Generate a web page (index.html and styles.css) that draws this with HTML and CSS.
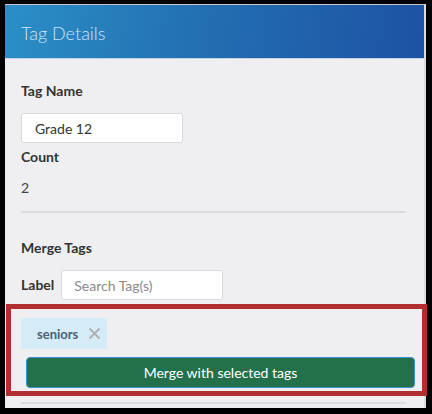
FILE: index.html
```html
<!DOCTYPE html>
<html>
<head>
<meta charset="utf-8">
<link rel="stylesheet" href="styles.css">
</head>
<body>
<div class="panel">
  <div class="panel-header">Tag Details</div>
  <div class="panel-body">
    <div class="field-label first">Tag Name</div>
    <div class="input name-input">Grade 12</div>
    <div class="field-label count-label">Count</div>
    <div class="value">2</div>
    <div class="divider"></div>
    <div class="field-label merge-label">Merge Tags</div>
    <div class="label-row">
      <span class="field-label inline">Label</span>
      <div class="input search-input placeholder">Search Tag(s)</div>
    </div>
    <div class="chips">
      <span class="chip">seniors
        <svg class="chip-x" width="13" height="13" viewBox="0 0 13 13"><path d="M1.5 1.5 L11.5 11.5 M11.5 1.5 L1.5 11.5" stroke="#b0b0b4" stroke-width="1.8" fill="none"/></svg>
      </span>
    </div>
    <button class="merge-btn">Merge with selected tags</button>
    <div class="divider bottom"></div>
  </div>
</div>
<div class="highlight"></div>
</body>
</html>
```

FILE: styles.css
```css
html, body {
  margin: 0;
  padding: 0;
}
body {
  background: #000;
  width: 432px;
  height: 414px;
  overflow: hidden;
  position: relative;
  font-family: Lato, "Open Sans", "Liberation Sans", sans-serif;
  box-sizing: border-box;
  padding: 4px 0 0 5px;
}
.panel {
  width: 421px;
  height: 404px;
  box-sizing: border-box;
  border-top: 1px solid #c9c9cc;
  border-right: 2px solid #dcdcdf;
  background: #efeff2;
  overflow: hidden;
}
.panel-header {
  height: 54px;
  box-sizing: border-box;
  background: linear-gradient(100deg, #2b8fc6 0%, #2370b2 45%, #1d52a3 100%);
  border-bottom: 1px solid #c3d3e6;
  color: #cfe5f5;
  font-weight: 300;
  font-size: 18px;
  padding: 17px 0 0 16px;
  line-height: 22px;
}
.panel-body {
  padding: 22px 16px 0 16px;
}
.field-label {
  font-weight: 700;
  font-size: 14px;
  line-height: 20px;
  color: #333;
}
.input {
  background: #fff;
  border: 1px solid #dadadd;
  border-radius: 3px;
  box-sizing: border-box;
  font-size: 14px;
  color: #333;
  display: flex;
  align-items: center;
}
.name-input {
  margin-top: 12px;
  width: 162px;
  height: 30px;
  padding-left: 13px;
}
.count-label { margin-top: 4px; }
.value {
  margin-top: 11px;
  font-size: 14px;
  line-height: 20px;
  color: #444;
}
.divider {
  margin-top: 13px;
  height: 2px;
  background: #dcdce0;
  margin-right: 2px;
}
.merge-label { margin-top: 25px; }
.label-row {
  margin-top: 12px;
  display: flex;
  align-items: center;
  gap: 7px;
}
.search-input {
  width: 162px;
  height: 30px;
  padding-left: 12px;
}
.placeholder { color: #8a8a8e; }
.chips {
  margin-top: 18px;
  display: flex;
}
.chip {
  background: #d5ebf7;
  height: 31px;
  box-sizing: border-box;
  padding: 0 6px 0 16px;
  display: flex;
  align-items: center;
  gap: 10px;
  font-size: 13px;
  font-weight: 700;
  color: #4f6272;
}
.chip-x {
  display: block;
}
.merge-btn {
  display: block;
  margin: 8px 0 0 5px;
  width: 389px;
  height: 31px;
  box-sizing: border-box;
  background: #23714b;
  border: 1px solid #3c8fd6;
  border-radius: 4px;
  color: #fff;
  font-family: Lato, "Open Sans", "Liberation Sans", sans-serif;
  font-size: 14px;
  font-weight: 400;
  padding: 0;
}
.divider.bottom { margin-top: 14px; }
.highlight {
  position: absolute;
  left: 6px;
  top: 304px;
  width: 421px;
  height: 92px;
  box-sizing: border-box;
  border: 5px solid #b12f31;
  pointer-events: none;
}
```
